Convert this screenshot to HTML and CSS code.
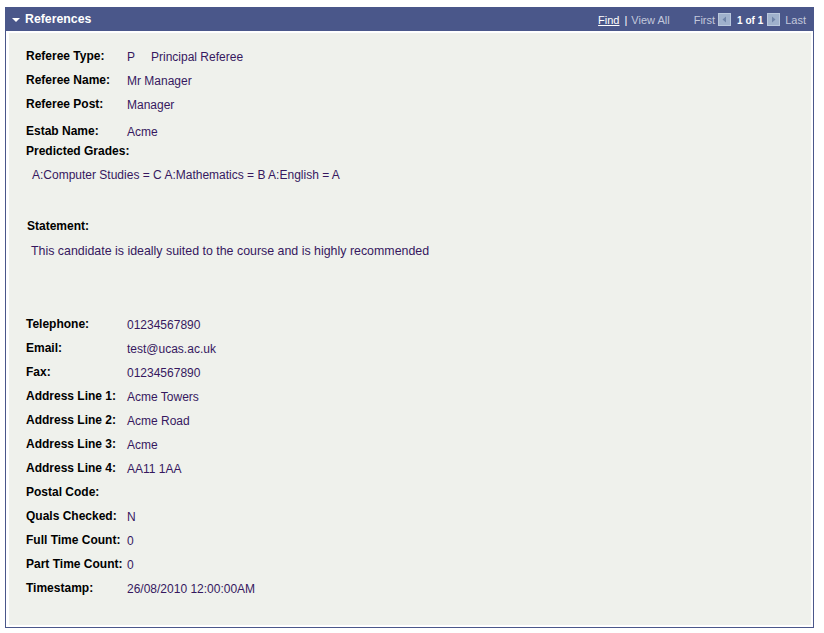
FILE: index.html
```html
<!DOCTYPE html>
<html>
<head>
<meta charset="utf-8">
<link rel="stylesheet" href="styles.css">
</head>
<body>
<div class="box">
  <div class="hdr">
    <div class="title"><span class="tri"></span>References</div>
    <div class="nav">
      <span class="find">Find</span><span class="sep">|</span><span class="dim va">View All</span>
      <span class="dim first">First</span>
      <span class="arr"><svg width="13" height="13" viewBox="0 0 13 13"><rect width="13" height="13" fill="#9fb1cc"/><rect x="0.5" y="0.5" width="12" height="12" fill="none" stroke="#b9c7dc"/><path d="M8 3.5 L4.5 6.5 L8 9.5 Z" fill="#6f84a8"/></svg></span>
      <span class="count">1 of 1</span>
      <span class="arr"><svg width="13" height="13" viewBox="0 0 13 13"><rect width="13" height="13" fill="#9fb1cc"/><rect x="0.5" y="0.5" width="12" height="12" fill="none" stroke="#b9c7dc"/><path d="M5 3.5 L8.5 6.5 L5 9.5 Z" fill="#6f84a8"/></svg></span>
      <span class="dim last">Last</span>
    </div>
  </div>
  <div class="panel">
    <div class="row"><span class="lbl">Referee Type:</span><span class="val">P</span><span class="val v2">Principal Referee</span></div>
    <div class="row"><span class="lbl">Referee Name:</span><span class="val">Mr Manager</span></div>
    <div class="row"><span class="lbl">Referee Post:</span><span class="val">Manager</span></div>
    <div class="row estab"><span class="lbl">Estab Name:</span><span class="val">Acme</span></div>
    <div class="row pg"><span class="lbl">Predicted Grades:</span></div>
    <div class="line grades">A:Computer Studies = C A:Mathematics = B A:English = A</div>
    <div class="row stmt"><span class="lbl">Statement:</span></div>
    <div class="line stext">This candidate is ideally suited to the course and is highly recommended</div>
    <div class="contact">
      <div class="row"><span class="lbl">Telephone:</span><span class="val">01234567890</span></div>
      <div class="row"><span class="lbl">Email:</span><span class="val">test@ucas.ac.uk</span></div>
      <div class="row"><span class="lbl">Fax:</span><span class="val">01234567890</span></div>
      <div class="row"><span class="lbl">Address Line 1:</span><span class="val">Acme Towers</span></div>
      <div class="row"><span class="lbl">Address Line 2:</span><span class="val">Acme Road</span></div>
      <div class="row"><span class="lbl">Address Line 3:</span><span class="val">Acme</span></div>
      <div class="row"><span class="lbl">Address Line 4:</span><span class="val">AA11 1AA</span></div>
      <div class="row"><span class="lbl">Postal Code:</span></div>
      <div class="row"><span class="lbl">Quals Checked:</span><span class="val">N</span></div>
      <div class="row"><span class="lbl">Full Time Count:</span><span class="val">0</span></div>
      <div class="row"><span class="lbl">Part Time Count:</span><span class="val">0</span></div>
      <div class="row"><span class="lbl">Timestamp:</span><span class="val">26/08/2010 12:00:00AM</span></div>
    </div>
  </div>
</div>
</body>
</html>
```
FILE: styles.css
```css
html, body { margin: 0; padding: 0; background: #ffffff; }
body { font-family: "Liberation Sans", Arial, sans-serif; font-size: 12px; color: #000; }
.box {
  margin: 7px 0 0 5px;
  width: 807px;
  height: 620px;
  border: 1px solid #4a578a;
  border-top: none;
  display: flex;
  flex-direction: column;
}
.hdr {
  height: 24px;
  background: #4a578a;
  display: flex;
  align-items: center;
  justify-content: space-between;
  color: #fff;
  flex-shrink: 0;
}
.title { font-weight: bold; font-size: 12.3px; display: flex; align-items: center; padding-left: 6px; }
.tri {
  width: 0; height: 0;
  border-left: 4px solid transparent;
  border-right: 4px solid transparent;
  border-top: 4px solid #ffffff;
  margin-right: 5px;
  margin-top: 1px;
}
.nav { display: flex; align-items: center; font-size: 11px; padding-right: 7px; padding-top: 2px; }
.find { color: #fff; text-decoration: underline; }
.sep { color: #fff; margin: 0 4px 0 5px; }
.dim { color: #c3c8dc; }
.first { margin-left: 24px; }
.arr { display: flex; margin: 0 4px 0 3px; position: relative; top: -1px; }
.count { font-weight: bold; font-size: 10px; color: #fff; margin: 0 1px 0 2px; }
.last { margin-left: 1px; }
.panel {
  margin: 2px 2px 2px 3px;
  background: #eff1ec;
  flex: 1;
  padding: 12px 0 0 17px;
}
.row { display: flex; height: 24px; align-items: center; }
.lbl { font-weight: bold; width: 101px; flex-shrink: 0; white-space: nowrap; position: relative; top: -1px; }
.val { color: #36185f; white-space: nowrap; }
.v2 { margin-left: 16px; }
.estab { margin-top: 3px; }
.pg { height: 16px; margin-top: 0; }
.line { color: #36185f; height: 24px; display: flex; align-items: center; white-space: nowrap; }
.grades { padding-left: 6px; margin-top: 3px; }
.stmt { margin-top: 28px; padding-left: 1px; }
.stext { padding-left: 5px; font-size: 12.4px; }
.contact { margin-top: 50px; }
```
